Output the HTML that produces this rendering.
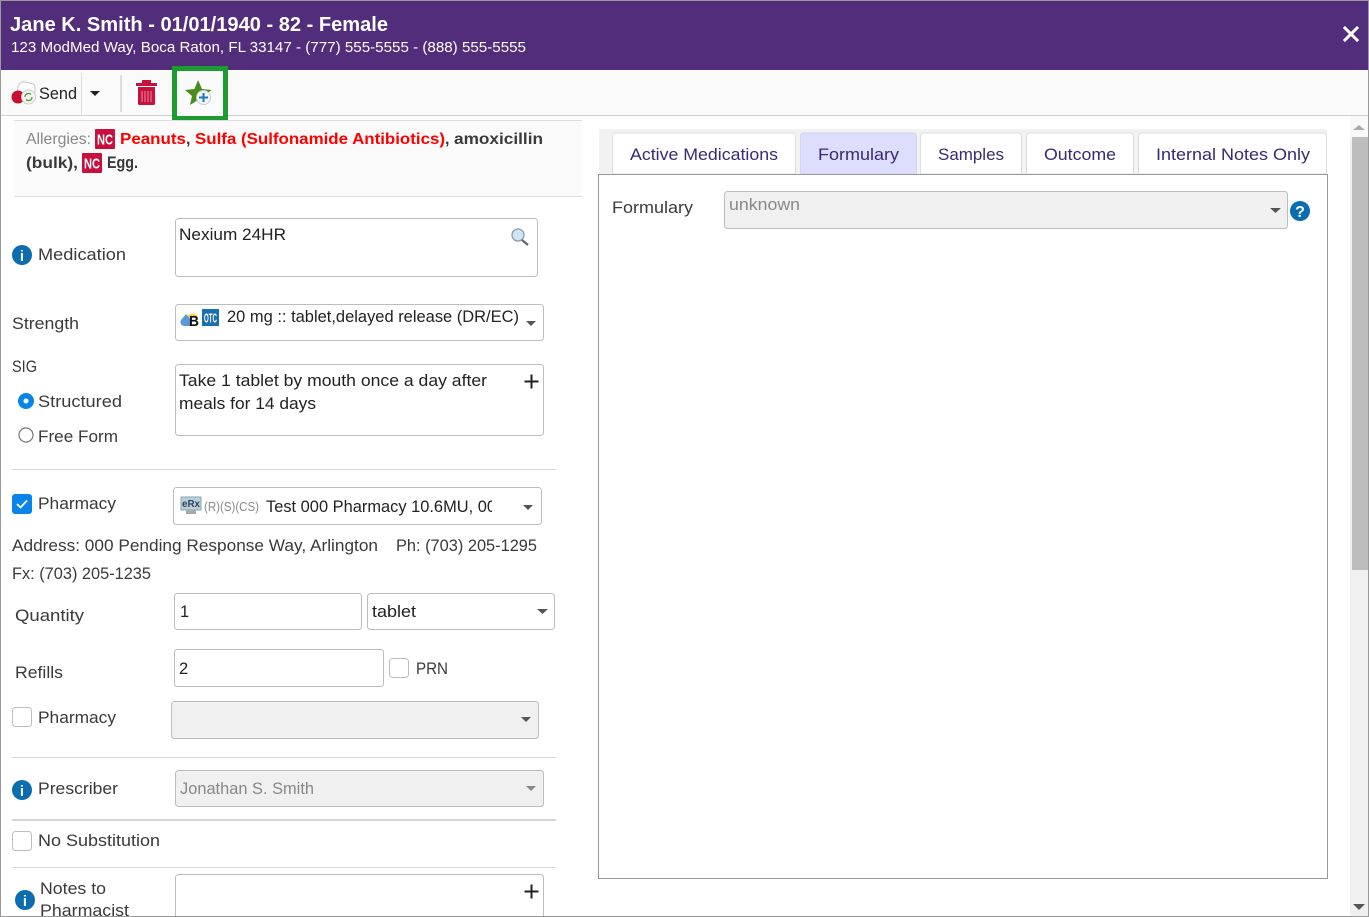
<!DOCTYPE html>
<html><head><meta charset="utf-8"><title>Prescription</title>
<style>
html,body{margin:0;padding:0;background:#fff;width:1369px;height:917px;overflow:hidden}
svg{display:block}
text{font-family:"Liberation Sans",sans-serif;font-size:16.5px;fill:#3a3a3a}
.d{fill:#222}
.t{fill:#3a2a72;font-size:16.5px}
.b{font-weight:bold}
.box{fill:#fff;stroke:#bdbdbd;stroke-width:1}
.dis{fill:#f0f0f0;stroke:#bdbdbd;stroke-width:1}
.ar{fill:#555}
.nc{font-size:15px;font-weight:bold;fill:#fff}
</style></head><body>
<svg width="1369" height="917" viewBox="0 0 1369 917" xmlns="http://www.w3.org/2000/svg">
<defs><clipPath id="c"><rect x="260" y="490" width="232" height="30"/></clipPath></defs>
<rect width="1369" height="917" fill="#fff"/>
<!-- header -->
<rect x="0" y="0" width="1369" height="70" fill="#512d7c"/>
<text x="10" y="31" textLength="378" lengthAdjust="spacingAndGlyphs" style="font-size:20px;font-weight:bold;fill:#fff">Jane K. Smith - 01/01/1940 - 82 - Female</text>
<text x="11" y="52" textLength="515" lengthAdjust="spacingAndGlyphs" style="font-size:14.5px;fill:#fff">123 ModMed Way, Boca Raton, FL 33147 - (777) 555-5555 - (888) 555-5555</text>
<path d="M1345 28l12 12M1357 28l-12 12" stroke="#fff" stroke-width="3" stroke-linecap="square"/>
<!-- toolbar -->
<rect x="0" y="70" width="1369" height="45" fill="#fafafa"/>
<rect x="0" y="115" width="1369" height="1" fill="#d0d0d0"/>
<!-- pill icon -->
<path d="M18 87a6 6 0 0 1 7-5l8 2a3 3 0 0 1 2 3v6l-12 6-6-4z" fill="#fff" stroke="#c8c8c8"/>
<ellipse cx="18" cy="97" rx="6.500" ry="6.500" fill="#c8102e"/>
<circle cx="28.500" cy="97" r="7" fill="#f4f4f4" stroke="#ccc"/>
<path d="M25 97a3.500 3.500 0 0 1 6-2.500M32 97a3.500 3.500 0 0 1-6 2.500" fill="none" stroke="#4da03a" stroke-width="1.300"/>
<text x="39" y="99" textLength="38" lengthAdjust="spacingAndGlyphs" class="d">Send</text>
<rect x="81" y="73" width="1" height="41" fill="#ddd"/>
<path d="M90 91h10l-5 5z" fill="#222"/>
<rect x="120" y="75" width="2" height="37" fill="#ddd"/>
<!-- trash -->
<path d="M136 83h21v3h-21zM142 80h9v3h-9z" fill="#c8103e"/>
<path d="M138 87h17v16.500a1.500 1.500 0 0 1-1.500 1.500h-14a1.500 1.500 0 0 1-1.500-1.500z" fill="#c8103e"/>
<path d="M142 91v11M145 91v11M148 91v11M151 91v11" stroke="#e98aa4" stroke-width="1"/>
<!-- green box -->
<rect x="174.500" y="68.500" width="51" height="50" fill="#fafafa" stroke="#1c9c30" stroke-width="5"/>
<path d="M198 80l4 9 9.500 1-7.500 6 2 9-8-5-8 5 2-9-7-6 9.500-1z" fill="#4a8c1c"/>
<circle cx="203.500" cy="97.500" r="7" fill="#f2f5f7" stroke="#ccc"/>
<path d="M199 97.500h9M203.500 93v9" stroke="#1f77b8" stroke-width="2"/>
<!-- allergies -->
<rect x="14" y="120" width="568" height="77" fill="#fafafa"/>
<rect x="14" y="120" width="568" height="1" fill="#ddd"/>
<rect x="14" y="196" width="568" height="1" fill="#ddd"/>
<text x="26" y="144" textLength="65" lengthAdjust="spacingAndGlyphs" style="fill:#888;font-size:16px">Allergies:</text>
<rect x="95" y="129" width="20" height="20" rx="1" fill="#c8103e"/>
<text x="97" y="144.500" textLength="16" lengthAdjust="spacingAndGlyphs" class="nc">NC</text>
<text x="120" y="144" textLength="66" lengthAdjust="spacingAndGlyphs" class="b" style="fill:#f00;font-size:16px">Peanuts</text>
<text x="186" y="144" class="b" style="font-size:16px">,</text>
<text x="195" y="144" textLength="250" lengthAdjust="spacingAndGlyphs" class="b" style="fill:#f00;font-size:16px">Sulfa (Sulfonamide Antibiotics)</text>
<text x="445" y="144" class="b" style="font-size:16px">,</text>
<text x="454" y="144" textLength="89" lengthAdjust="spacingAndGlyphs" class="b" style="font-size:16px">amoxicillin</text>
<text x="26" y="168" textLength="52" lengthAdjust="spacingAndGlyphs" class="b" style="font-size:16px">(bulk),</text>
<rect x="82" y="153" width="20" height="20" rx="1" fill="#c8103e"/>
<text x="84" y="168.500" textLength="16" lengthAdjust="spacingAndGlyphs" class="nc">NC</text>
<text x="107" y="168" textLength="31" lengthAdjust="spacingAndGlyphs" class="b" style="font-size:16.500px">Egg.</text>
<!-- medication -->
<circle cx="22" cy="255" r="10" fill="#0a6db0"/>
<text x="22" y="261" text-anchor="middle" class="b" style="fill:#fff;font-size:15px">i</text>
<text x="38" y="260" textLength="88" lengthAdjust="spacingAndGlyphs">Medication</text>
<rect x="175.500" y="218.500" width="362" height="58" rx="3" class="box"/>
<text x="179" y="240" textLength="107" lengthAdjust="spacingAndGlyphs" class="d">Nexium 24HR</text>
<circle cx="518" cy="235" r="6" fill="#cfe6f8" stroke="#8a9aa8" stroke-width="1.300"/>
<path d="M522 240l6 5" stroke="#666" stroke-width="2.200"/>
<!-- strength -->
<text x="12" y="329" textLength="67" lengthAdjust="spacingAndGlyphs">Strength</text>
<rect x="175.500" y="304.500" width="368" height="36" rx="3" class="box"/>
<path d="M187 318a6 5 0 0 1 10-1" fill="none" stroke="#f5d33a" stroke-width="2.500"/>
<path d="M186 314l5 6v6h-7a4 4 0 0 1-3-6z" fill="#5b9bd5"/>
<text x="189" y="326" textLength="10" lengthAdjust="spacingAndGlyphs" class="b" style="font-size:15px;fill:#111">B</text>
<rect x="202" y="309" width="17" height="17" fill="#1a70ac"/>
<text x="204" y="322.500" textLength="13" lengthAdjust="spacingAndGlyphs" class="b" style="font-size:13px;fill:#fff">OTC</text>
<text x="227" y="322" textLength="292" lengthAdjust="spacingAndGlyphs" class="d">20 mg :: tablet,delayed release (DR/EC)</text>
<path d="M526 321h10l-5 5z" class="ar"/>
<!-- SIG -->
<text x="12" y="372" textLength="25" lengthAdjust="spacingAndGlyphs" style="font-size:16.500px">SIG</text>
<circle cx="26" cy="401" r="8" fill="#0a84e8"/>
<circle cx="26" cy="401" r="2.500" fill="#fff"/>
<text x="38" y="407" textLength="84" lengthAdjust="spacingAndGlyphs">Structured</text>
<circle cx="26" cy="435" r="7" fill="#fff" stroke="#777" stroke-width="1.200"/>
<text x="38" y="442" textLength="80" lengthAdjust="spacingAndGlyphs">Free Form</text>
<rect x="175.500" y="364.500" width="368" height="71" rx="3" class="box"/>
<text x="179" y="386" textLength="308" lengthAdjust="spacingAndGlyphs" class="d">Take 1 tablet by mouth once a day after</text>
<text x="179" y="409" textLength="137" lengthAdjust="spacingAndGlyphs" class="d">meals for 14 days</text>
<path d="M524.500 381.500h14M531.500 374.500v14" stroke="#222" stroke-width="2"/>
<rect x="12" y="469" width="544" height="1" fill="#d9d9d9"/>
<!-- pharmacy -->
<rect x="12" y="494" width="20" height="20" rx="3" fill="#0a84e8"/>
<path d="M17 504l3.500 3.500 6.500-7" fill="none" stroke="#fff" stroke-width="1.800"/>
<text x="38" y="509" textLength="78" lengthAdjust="spacingAndGlyphs">Pharmacy</text>
<rect x="173.500" y="487.500" width="368" height="37" rx="3" class="box"/>
<rect x="181" y="497" width="20" height="13" fill="#b9cfe0" stroke="#8aa"/>
<text x="182" y="507" textLength="18" lengthAdjust="spacingAndGlyphs" class="b" style="font-size:10px;fill:#345">eRx</text>
<rect x="186" y="510" width="10" height="4" fill="#aaa"/>
<text x="204" y="511" textLength="55" lengthAdjust="spacingAndGlyphs" style="font-size:13px;fill:#888">(R)(S)(CS)</text>
<g clip-path="url(#c)"><text x="266" y="512" textLength="230" lengthAdjust="spacingAndGlyphs" class="d">Test 000 Pharmacy 10.6MU, 00</text></g>
<path d="M523 505h10l-5 5z" class="ar"/>
<text x="12" y="551" textLength="366" lengthAdjust="spacingAndGlyphs">Address: 000 Pending Response Way, Arlington</text>
<text x="396" y="551" textLength="141" lengthAdjust="spacingAndGlyphs">Ph: (703) 205-1295</text>
<text x="12" y="579" textLength="139" lengthAdjust="spacingAndGlyphs">Fx: (703) 205-1235</text>
<!-- quantity -->
<text x="15" y="621" textLength="69" lengthAdjust="spacingAndGlyphs">Quantity</text>
<rect x="174.500" y="593.500" width="187" height="36" rx="3" class="box"/>
<text x="180" y="617" class="d">1</text>
<rect x="367.500" y="593.500" width="187" height="36" rx="3" class="box"/>
<text x="372" y="617" textLength="44" lengthAdjust="spacingAndGlyphs" class="d">tablet</text>
<path d="M537 609h11l-5.500 5z" class="ar"/>
<!-- refills -->
<text x="15" y="678" textLength="48" lengthAdjust="spacingAndGlyphs">Refills</text>
<rect x="174.500" y="649.500" width="209" height="37" rx="3" class="box"/>
<text x="179" y="674" class="d">2</text>
<rect x="389.500" y="658.500" width="19" height="19" rx="3" class="box"/>
<text x="416" y="674" textLength="32" lengthAdjust="spacingAndGlyphs">PRN</text>
<!-- pharmacy 2 -->
<rect x="12.500" y="707.500" width="19" height="19" rx="3" class="box"/>
<text x="38" y="723" textLength="78" lengthAdjust="spacingAndGlyphs">Pharmacy</text>
<rect x="171.500" y="701.500" width="367" height="37" rx="3" class="dis"/>
<path d="M521 717h10l-5 5z" class="ar"/>
<rect x="12" y="757" width="544" height="1" fill="#d9d9d9"/>
<!-- prescriber -->
<circle cx="22" cy="790" r="10" fill="#0a6db0"/>
<text x="22" y="796" text-anchor="middle" class="b" style="fill:#fff;font-size:15px">i</text>
<text x="38" y="794" textLength="80" lengthAdjust="spacingAndGlyphs">Prescriber</text>
<rect x="175.500" y="770.500" width="368" height="36" rx="3" class="dis"/>
<text x="180" y="794" textLength="134" lengthAdjust="spacingAndGlyphs" style="fill:#888">Jonathan S. Smith</text>
<path d="M526 786h10l-5 5z" fill="#888"/>
<rect x="12" y="819" width="544" height="2" fill="#d4d4d4"/>
<!-- no sub -->
<rect x="12.500" y="831.500" width="19" height="19" rx="3" class="box"/>
<text x="38" y="846" textLength="122" lengthAdjust="spacingAndGlyphs">No Substitution</text>
<rect x="12" y="867" width="544" height="1" fill="#d9d9d9"/>
<!-- notes -->
<circle cx="25" cy="900" r="10" fill="#0a6db0"/>
<text x="25" y="906" text-anchor="middle" class="b" style="fill:#fff;font-size:15px">i</text>
<text x="40" y="894" textLength="66" lengthAdjust="spacingAndGlyphs">Notes to</text>
<text x="40" y="916" textLength="89" lengthAdjust="spacingAndGlyphs">Pharmacist</text>
<rect x="175.500" y="874.500" width="368" height="60" rx="3" class="box"/>
<path d="M524.500 891.500h14M531.500 884.500v14" stroke="#222" stroke-width="2"/>
<!-- right panel -->
<rect x="599" y="129" width="728" height="46" fill="#f2f2f2"/>
<path d="M612.500 174v-38a3 3 0 0 1 3-3h177a3 3 0 0 1 3 3v38z" fill="#fff" stroke="#ddd"/>
<path d="M800.500 174v-38a3 3 0 0 1 3-3h110a3 3 0 0 1 3 3v38z" fill="#ddddfd" stroke="#d4d4ee"/>
<path d="M920.500 174v-38a3 3 0 0 1 3-3h95a3 3 0 0 1 3 3v38z" fill="#fff" stroke="#ddd"/>
<path d="M1026.500 174v-38a3 3 0 0 1 3-3h101a3 3 0 0 1 3 3v38z" fill="#fff" stroke="#ddd"/>
<path d="M1138.500 174v-38a3 3 0 0 1 3-3h182a3 3 0 0 1 3 3v38z" fill="#fff" stroke="#ddd"/>
<text x="630" y="160" textLength="148" lengthAdjust="spacingAndGlyphs" class="t">Active Medications</text>
<text x="818" y="160" textLength="81" lengthAdjust="spacingAndGlyphs" class="t">Formulary</text>
<text x="938" y="160" textLength="66" lengthAdjust="spacingAndGlyphs" class="t">Samples</text>
<text x="1044" y="160" textLength="72" lengthAdjust="spacingAndGlyphs" class="t">Outcome</text>
<text x="1156" y="160" textLength="154" lengthAdjust="spacingAndGlyphs" class="t">Internal Notes Only</text>
<rect x="598.500" y="174.500" width="729" height="704" fill="#fff" stroke="#999"/>
<text x="612" y="213" textLength="81" lengthAdjust="spacingAndGlyphs">Formulary</text>
<rect x="724.500" y="191.500" width="563" height="37" rx="3" class="dis"/>
<text x="729" y="210" textLength="71" lengthAdjust="spacingAndGlyphs" style="fill:#888">unknown</text>
<path d="M1270 208h11l-5.500 5z" class="ar"/>
<circle cx="1300" cy="211" r="10" fill="#0a6db0"/>
<text x="1300" y="217" text-anchor="middle" class="b" style="fill:#fff;font-size:16px">?</text>
<!-- scrollbar -->
<rect x="1350" y="116" width="18" height="800" fill="#f0f0f0"/>
<rect x="1350" y="116" width="18" height="21" fill="#f8f8f8"/>
<path d="M1353 130h12l-6-5z" fill="#aaa"/>
<rect x="1352" y="137" width="16" height="433" fill="#bdbdbd"/>
<path d="M1353 904h12l-6 6z" fill="#555"/>
<!-- frame -->
<rect x="0.500" y="0.500" width="1368" height="916" fill="none" stroke="#999"/>
</svg>
</body></html>
